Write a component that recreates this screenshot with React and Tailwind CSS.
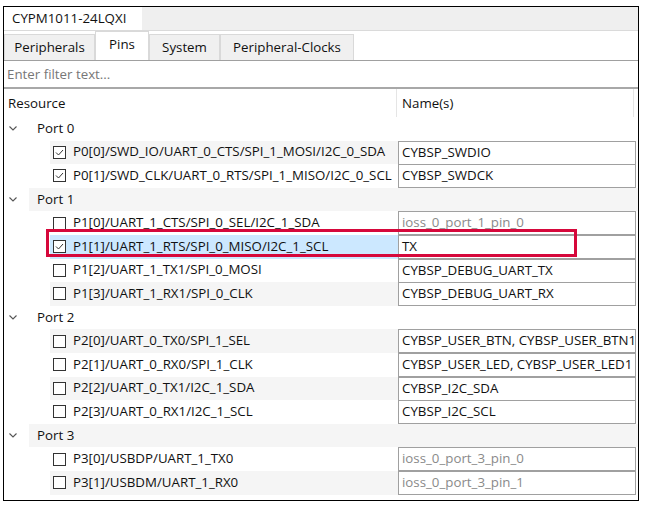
import { useState } from 'react';

const rows = [
  { port: 'Port 0' },
  { pin: 'P0[0]/SWD_IO/UART_0_CTS/SPI_1_MOSI/I2C_0_SDA', name: 'CYBSP_SWDIO', checked: true },
  { pin: 'P0[1]/SWD_CLK/UART_0_RTS/SPI_1_MISO/I2C_0_SCL', name: 'CYBSP_SWDCK', checked: true },
  { port: 'Port 1' },
  { pin: 'P1[0]/UART_1_CTS/SPI_0_SEL/I2C_1_SDA', name: 'ioss_0_port_1_pin_0', placeholder: true },
  { pin: 'P1[1]/UART_1_RTS/SPI_0_MISO/I2C_1_SCL', name: 'TX', checked: true, selected: true },
  { pin: 'P1[2]/UART_1_TX1/SPI_0_MOSI', name: 'CYBSP_DEBUG_UART_TX' },
  { pin: 'P1[3]/UART_1_RX1/SPI_0_CLK', name: 'CYBSP_DEBUG_UART_RX' },
  { port: 'Port 2' },
  { pin: 'P2[0]/UART_0_TX0/SPI_1_SEL', name: 'CYBSP_USER_BTN, CYBSP_USER_BTN1' },
  { pin: 'P2[1]/UART_0_RX0/SPI_1_CLK', name: 'CYBSP_USER_LED, CYBSP_USER_LED1' },
  { pin: 'P2[2]/UART_0_TX1/I2C_1_SDA', name: 'CYBSP_I2C_SDA' },
  { pin: 'P2[3]/UART_0_RX1/I2C_1_SCL', name: 'CYBSP_I2C_SCL' },
  { port: 'Port 3' },
  { pin: 'P3[0]/USBDP/UART_1_TX0', name: 'ioss_0_port_3_pin_0', placeholder: true },
  { pin: 'P3[1]/USBDM/UART_1_RX0', name: 'ioss_0_port_3_pin_1', placeholder: true },
];

const tabs = [
  { label: 'Peripherals', width: 'w-[91px]' },
  { label: 'Pins', width: 'w-[54px]' },
  { label: 'System', width: 'w-[71px]' },
  { label: 'Peripheral-Clocks', width: 'w-[134px]' },
];

const Chevron = () => (
  <svg width="8" height="5" viewBox="0 0 8 5" className="ml-[5px] mr-[12px]">
    <path d="M0.5 0.5 L4 4 L7.5 0.5" fill="none" stroke="#555" strokeWidth="1.1" />
  </svg>
);

const Checkbox = ({ checked }) => (
  <div className="w-[13px] h-[13px] border border-[#333] bg-white flex items-center justify-center shrink-0">
    {checked && (
      <svg width="11" height="11" viewBox="0 0 11 11">
        <path d="M2 5.5 L4.5 8 L9 3" fill="none" stroke="#333" strokeWidth="1" />
      </svg>
    )}
  </div>
);

const App = () => {
  const [active] = useState('Pins');

  return (
    <div
      className="min-h-screen bg-white pt-[6px] pl-[3px] text-[13.3px] text-[#111]"
      style={{ fontFamily: '"Open Sans", "Noto Sans", sans-serif' }}
    >
      <div className="w-[636px] h-[495px] border border-black flex flex-col overflow-hidden">
        {/* Title */}
        <div className="flex h-[24px] shrink-0 bg-[#efefef] border-b border-[#dadada]">
          <div className="w-[138px] bg-white flex items-center pl-[8px]">CYPM1011-24LQXI</div>
        </div>

        {/* Tabs */}
        <div className="flex items-end h-[30px] shrink-0 bg-white border-b border-[#a0a0a0]">
          {tabs.map((tab) =>
            tab.label === active ? (
              <div
                key={tab.label}
                className={`${tab.width} h-[29px] bg-white border-x border-t border-[#d9d9d9] flex items-center justify-center pb-[3px]`}
              >
                {tab.label}
              </div>
            ) : (
              <div
                key={tab.label}
                className={`${tab.width} h-[26px] bg-[#f0f0f0] border-x border-t border-[#d9d9d9] flex items-center justify-center`}
              >
                {tab.label}
              </div>
            )
          )}
        </div>

        {/* Filter */}
        <div className="h-[28px] shrink-0 flex items-center px-[3px] pt-[1px] border-b-2 border-[#a8a8a8] text-[#777]">
          Enter filter text...
        </div>

        {/* Header */}
        <div className="h-[28px] shrink-0 flex">
          <div className="w-[393px] flex items-center pl-[4px] pt-[2px] border-r border-[#e5e5e5]">Resource</div>
          <div className="w-[237px] flex items-center pl-[5px] pt-[2px] border-r border-[#e5e5e5]">Name(s)</div>
        </div>

        {/* Tree */}
        <div className="flex flex-col">
          {rows.map((row, i) => {
            const bg = i % 2 === 1 ? 'bg-[#f5f5f5]' : 'bg-white';
            if (row.port) {
              return (
                <div key={i} className="h-[23.6px] flex items-center">
                  <Chevron />
                  <div className={`flex-1 self-stretch flex items-center pl-[8px] ${bg}`}>{row.port}</div>
                </div>
              );
            }
            return (
              <div key={i} className="relative h-[23.6px] flex">
                <div
                  className={`w-[348px] ml-[46px] flex items-center pl-[3px] ${
                    row.selected ? 'bg-[#cce8ff]' : bg
                  }`}
                >
                  <Checkbox checked={row.checked} />
                  <span className="ml-[7px] whitespace-nowrap">{row.pin}</span>
                </div>
                <div className={`w-[238px] ${bg}`}>
                  <div
                    className={`h-[24px] border border-[#a0a0a0] bg-white flex items-center pl-[3px] whitespace-nowrap overflow-hidden ${
                      row.placeholder ? 'text-[#8a8a8a]' : ''
                    }`}
                  >
                    {row.name}
                  </div>
                </div>
                {row.selected && (
                  <div className="absolute left-[42px] top-[-6px] w-[531px] h-[28px] border-[3px] border-[#d6083b] pointer-events-none" />
                )}
              </div>
            );
          })}
        </div>
      </div>
    </div>
  );
};

export default App;
